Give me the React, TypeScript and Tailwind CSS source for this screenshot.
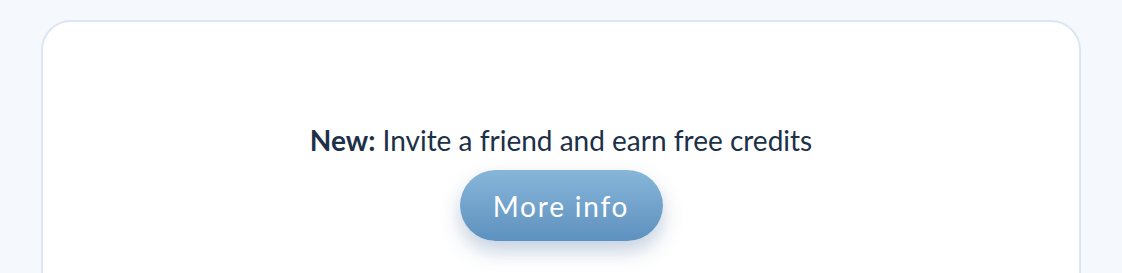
export default function App() {
  return (
    <div className="h-[273px] overflow-hidden bg-[#f5f9fd] px-[41px] pt-[20px] font-['Lato',sans-serif]">
      <div className="h-[300px] rounded-[30px] border-2 border-[#dbe6f2] bg-white flex flex-col items-center pt-[101px]">
        <p className="text-[28px] leading-[34px] text-[#1c3047]">
          <span className="font-bold">New:</span> Invite a friend and earn free credits
        </p>
        <button className="mt-[13px] h-[71px] w-[203px] rounded-full bg-gradient-to-b from-[#88b6da] to-[#5d91be] text-white text-[28px] tracking-[1.8px] shadow-[0_10px_20px_rgba(60,100,150,0.3)]">
          More info
        </button>
      </div>
    </div>
  );
}
